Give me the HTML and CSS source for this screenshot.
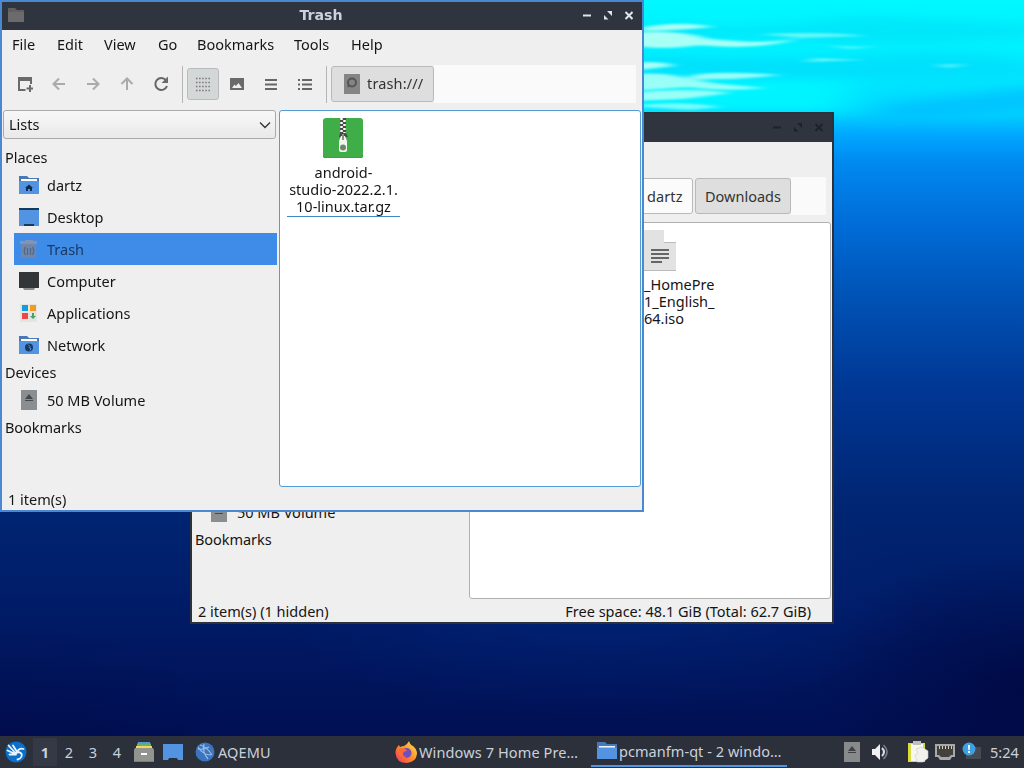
FILE: index.html
```html
<!DOCTYPE html>
<html lang="en">
<head>
<meta charset="utf-8">
<title>Desktop</title>
<link rel="stylesheet" href="styles.css">
</head>
<body>
<div class="desktop">
  <svg class="wallpaper" width="1024" height="768" viewBox="0 0 1024 768">
    <defs>
      <linearGradient id="sea" x1="0" y1="0" x2="0" y2="1">
        <stop offset="0" stop-color="#00f8ff"/>
        <stop offset=".07" stop-color="#00f0ff"/>
        <stop offset=".11" stop-color="#00e4ff"/>
        <stop offset=".15" stop-color="#00d0ff"/>
        <stop offset=".175" stop-color="#00a8ff"/>
        <stop offset=".21" stop-color="#008af0"/>
        <stop offset=".29" stop-color="#006dd8"/>
        <stop offset=".38" stop-color="#0054b8"/>
        <stop offset=".5" stop-color="#003895"/>
        <stop offset=".65" stop-color="#002674"/>
        <stop offset=".8" stop-color="#001b66"/>
        <stop offset=".96" stop-color="#000f53"/>
      </linearGradient>
      <radialGradient id="deep"><stop offset="0" stop-color="#00063d" stop-opacity=".7"/><stop offset="1" stop-color="#00063d" stop-opacity="0"/></radialGradient>
      <radialGradient id="glow"><stop offset="0" stop-color="#00369a" stop-opacity=".3"/><stop offset="1" stop-color="#00369a" stop-opacity="0"/></radialGradient>
      <filter id="soft" x="-20%" y="-100%" width="140%" height="300%"><feGaussianBlur stdDeviation="7 1"/></filter>
      <filter id="wide" x="-20%" y="-100%" width="140%" height="300%"><feGaussianBlur stdDeviation="24 5"/></filter>
    </defs>
    <rect width="1024" height="768" fill="url(#sea)"/>
    <g filter="url(#wide)">
      <path d="M640 22Q760 35 850 15L1040 25V35Q880 50 760 35L640 40Z" fill="#00dcf6" opacity=".55"/>
      <path d="M640 52Q740 65 860 55T1040 65V76Q840 82 640 70Z" fill="#00d8fa" opacity=".5"/>
      <path d="M880 106L1060 84V105Q960 115 880 122Z" fill="#00b4ff" opacity=".55"/>
      <path d="M600 80H850V112H600Z" fill="#00f8ff" opacity=".85"/>
    </g>
    <g filter="url(#soft)" fill="#a8fff6">
      <path d="M640 28Q680 20 712 27Q675 31 640 31Z"/>
      <path d="M630 33Q680 29 708 39L750 42Q779 42 799 38Q760 51 700 45Q660 51 630 45Z"/>
      <path d="M630 63Q663 60 674 66L630 71Z"/>
      <path d="M690 76Q712 70 780 75Q735 80 718 79L690 80Z" opacity=".9"/>
      <path d="M630 74Q670 72 684 78L720 84L765 88Q720 92 690 87L630 91Z" opacity=".9"/>
      <path d="M630 93Q690 87 730 93L684 99L630 101Z" opacity=".9"/>
      <path d="M815 58L865 60L805 62ZM825 45Q850 48 880 46L850 49ZM760 34Q830 31 865 36L800 38ZM935 65L965 64L950 68Z" opacity=".6"/>
      <path d="M630 106Q680 100 720 107L690 110Z" opacity=".7"/>
    </g>
    <ellipse cx="1024" cy="690" rx="210" ry="140" fill="url(#deep)"/>
    <ellipse cx="600" cy="600" rx="330" ry="120" fill="url(#glow)"/>
    <ellipse cx="0" cy="740" rx="240" ry="120" fill="url(#deep)" opacity=".4"/>
  </svg>

  <section class="window back">
    <header class="titlebar">
      <svg class="controls" width="50" height="12" viewBox="0 0 50 12"><path d="M0 6.500h8" stroke-width="2"/><path d="M21 10.500V6l4.500 4.500zM29 2v5l-5-5z" fill="currentColor" stroke="none"/><path d="M42.500 3l7 7m0-7l-7 7" stroke-width="2"/></svg>
    </header>
    <div class="menubar"></div>
    <div class="toolbar">
      <div class="pathbar"><span class="crumb plain">dartz</span><span class="crumb current">Downloads</span><span class="path-rest"></span></div>
    </div>
    <div class="body">
      <aside class="sidebar">
        <div class="bottom-places">
          <div class="place"><svg class="ico" viewBox="0 0 20 20"><path fill="#8b8e91" d="M2 0h16v20H2z"/><path fill="#45484b" d="M10 5l4 5H6zM6 11h8v1H6z"/></svg><span class="volume">50 MB Volume</span></div>
          <div class="group bookmarks">Bookmarks</div>
        </div>
      </aside>
      <main class="files">
        <div class="iso">
          <svg width="34" height="42" viewBox="0 0 34 42"><path d="M0 0h20v12h12v28H0z" fill="#e2e2e2"/><path d="M20 12.500h12M0 40.500h32" stroke="#bbb"/><path d="M7 20h18M7 24h18M7 28h18M7 32h11" stroke="#666" stroke-width="2"/></svg>
          <div class="iso-name">_HomePre<br>1_English_<br>64.iso</div>
        </div>
      </main>
    </div>
    <footer class="status"><span class="hidden-count">2 item(s) (1 hidden)</span><span class="space">Free space: 48.1 GiB (Total: 62.7 GiB)</span></footer>
  </section>

  <section class="window front">
    <header class="titlebar">
      <svg class="app-icon" width="16" height="14" viewBox="0 0 16 14"><path fill="#5e5f61" d="M0 0h7l2 2h7v12H0z"/><path fill="#6b6b6b" d="M0 4h16v10H0z"/></svg>
      <h1>Trash</h1>
      <svg class="controls" width="50" height="12" viewBox="0 0 50 12"><path d="M0 6.500h8" stroke-width="2"/><path d="M21 10.500V6l4.500 4.500zM29 2v5l-5-5z" fill="currentColor" stroke="none"/><path d="M42.500 3l7 7m0-7l-7 7" stroke-width="2"/></svg>
    </header>
    <nav class="menubar"><span class="m1">File</span><span class="m2">Edit</span><span class="m3">View</span><span class="m4">Go</span><span class="m5">Bookmarks</span><span class="m6">Tools</span><span class="m7">Help</span></nav>
    <div class="toolbar">
      <div class="tools">
        <svg class="tool" viewBox="0 0 16 16"><path fill="none" stroke="#6a6a6a" stroke-width="2" d="M8.500 14H2V2h12v6"/><path fill="#6a6a6a" d="M1 1h14v4H1zM12 9h2v2.500h2.500v2H14V16h-2v-2.500H9.500v-2H12z"/></svg>
        <svg class="tool faded" viewBox="0 0 16 16"><path d="M14 8H3m5-5.500L2.500 8 8 13.500"/></svg>
        <svg class="tool faded" viewBox="0 0 16 16"><path d="M2 8h11M8 2.500L13.500 8 8 13.500"/></svg>
        <svg class="tool faded" viewBox="0 0 16 16"><path d="M8 14V3M2.500 8L8 2.500 13.500 8"/></svg>
        <svg class="tool line" viewBox="0 0 16 16"><path d="M13 4.200A6 6 0 1 0 14 10"/><path stroke="none" fill="#6a6a6a" d="M15 .500v6.500H8.500z"/></svg>
      </div>
      <i class="sep"></i>
      <div class="views">
        <span class="active-view"><svg class="tool dots" viewBox="0 0 16 16"><path d="M1 2.500h14M1 6.500h14M1 10.500h14M1 14.500h14"/></svg></span>
        <svg class="tool" viewBox="0 0 16 16"><path fill="#6a6a6a" fill-rule="evenodd" d="M1 2h14v12H1zM3 12h10L9.500 7 7 10 5.500 8.500z"/></svg>
        <svg class="tool line" viewBox="0 0 16 16"><path d="M2 4h12M2 8.500h12M2 13h12"/></svg>
        <svg class="tool line" viewBox="0 0 16 16"><path d="M1 4h2M1 8.500h2M1 13h2M5 4h10M5 8.500h10M5 13h10"/></svg>
      </div>
      <i class="sep"></i>
      <div class="pathbar"><span class="crumb current trash-crumb"><svg width="16" height="20" viewBox="0 0 16 20"><path fill="#858585" d="M0 0h16v20H0z"/><circle cx="8" cy="8.500" r="4" fill="none" stroke="#555" stroke-width="2"/><path d="M5 11l-1 2" stroke="#555" stroke-width="2"/></svg><b>trash:///</b></span><span class="path-rest"></span></div>
    </div>
    <div class="body">
      <aside class="sidebar">
        <div class="combo"><span>Lists</span><svg width="12" height="8" viewBox="0 0 12 8"><path d="M1 1.500l5 5 5-5" fill="none" stroke="#333" stroke-width="1.300"/></svg></div>
        <div class="group places">Places</div>
        <div class="place"><svg class="ico" viewBox="0 0 20 20"><path fill="#4a78b5" d="M0 1h8l2 2h10v4H0z"/><path fill="#fff" d="M2 4h16v4H2z"/><path fill="#5294e2" d="M0 6h20v13H0z"/><path fill="#0c2c54" d="M10 9.500l4 3.500h-1v3h-2v-2H9v2H7v-3H6z"/></svg><span class="home">dartz</span></div>
        <div class="place"><svg class="ico" viewBox="0 0 20 20"><path fill="#5294e2" d="M0 1h20v18H0z"/><path fill="#16395f" d="M0 1h20v2H0zM5 17h10v2H5z"/></svg><span class="desk">Desktop</span></div>
        <div class="place selected"><svg class="ico" viewBox="0 0 20 20"><path fill="#7e95b5" d="M1 2h5V1h8v1h4v3H1z"/><path fill="#7287a8" d="M2 5h15v14H2z"/><path d="M6.500 8q-2.500 4 0 8M13.500 8q2.500 4 0 8M8.500 9v7M11.500 9v7" fill="none" stroke="#526888" stroke-width="1.300"/></svg><span class="trash">Trash</span></div>
        <div class="place"><svg class="ico" viewBox="0 0 20 20"><path fill="#333639" d="M0 1h20v16H0z"/><path fill="#8b8d8f" d="M4 17h12l-1 2H5z"/></svg><span class="computer">Computer</span></div>
        <div class="place"><svg class="ico" viewBox="0 0 20 20"><path fill="#e5e4df" d="M1 1h17v18H1z"/><path fill="#139cdf" d="M3 2h6v6H3z"/><path fill="#f19b22" d="M11 2h6v6h-6z"/><path fill="#ed4747" d="M3 10h6v6H3z"/><path fill="#42a466" d="M13 10h2v3h2l-3 3-3-3h2z"/></svg><span class="apps">Applications</span></div>
        <div class="place"><svg class="ico" viewBox="0 0 20 20"><path fill="#4a78b5" d="M0 1h8l2 2h10v4H0z"/><path fill="#fff" d="M2 4h16v4H2z"/><path fill="#5294e2" d="M0 6h20v13H0z"/><circle cx="10" cy="12.500" r="4" fill="#16395f"/><path d="M9 9.500l2 2-1 1 2 1-1 2" fill="none" stroke="#5294e2"/></svg><span class="network">Network</span></div>
        <div class="group devices">Devices</div>
        <div class="place"><svg class="ico" viewBox="0 0 20 20"><path fill="#8b8e91" d="M2 0h16v20H2z"/><path fill="#45484b" d="M10 4l4 5H6zM6 10h8v1H6z"/></svg><span class="volume">50 MB Volume</span></div>
        <div class="group bookmarks">Bookmarks</div>
      </aside>
      <main class="files">
        <div class="archive">
          <svg class="zip" width="40" height="40" viewBox="0 0 40 40"><rect width="40" height="40" rx="3" fill="#3fae49"/><path d="M0 37q0 3 3 3h34q3 0 3-3" fill="none" stroke="#329b3d"/><path fill="#474b43" d="M17 0h6v15l2 4h-9l1-4z"/><path d="M18.500 0v15M21.500 2v13" stroke="#fff" stroke-width="2.500" stroke-dasharray="2 2"/><path fill="#f2f5ee" d="M18 18h4l2 5v9q0 2-2 2h-4q-2 0-2-2v-9z"/><circle cx="20" cy="29.500" r="3" fill="#6b8a6b"/><path d="M20 16v6" stroke="#8b9187" stroke-width="2"/></svg>
          <div class="archive-name">android-<br>studio-2022.2.1.<br>10-linux.tar.gz</div>
        </div>
      </main>
    </div>
    <footer class="status"><span class="count">1 item(s)</span></footer>
  </section>

  <footer class="panel">
    <svg class="start" width="22" height="22" viewBox="0 0 22 22"><circle cx="11" cy="11" r="10.500" fill="#0b6fcb"/><path d="M3.500 4.500l7.500 8M2.500 9.500l8 3.500M8 4.500l4.500 7M4.500 13.500l6.500 0M11 12.500q3-6 7.500-4.500M13 11q5 1 3.500 4.500-1 2.500-4 3" fill="none" stroke="#e9f5ff" stroke-width="1.800" stroke-linecap="round"/></svg>
    <div class="pager"><span class="on">1</span><span>2</span><span>3</span><span>4</span></div>
    <svg class="cabinet" width="20" height="20" viewBox="0 0 20 20"><path fill="#5597c2" d="M4 0h12v3H4z"/><path fill="#60b373" d="M3 1.500h14V5H3z"/><path fill="#f7d75b" d="M2 4h16v4H2z"/><path fill="#92948f" d="M1 6h18l1 2v12H0V8z"/><path fill="#7b7d78" d="M0 19h20v1H0z"/><path fill="#fff" d="M7 11h6v2H7z"/></svg>
    <svg class="show" width="20" height="18" viewBox="0 0 20 18"><path fill="#5294e2" d="M0 1h20v16h-5l-1-2H6l-1 2H0z"/></svg>
    <div class="task aqemu"><svg width="20" height="20" viewBox="0 0 20 20"><circle cx="10" cy="10" r="9.500" fill="#3b74c0"/><path d="M3 5q5 8 13 8M5 3q7 2 12 10M9 2q-2 8 4 15M14 5q-5 3-11 2" stroke="#9bbce2" stroke-width="1.200" fill="none"/></svg><span>AQEMU</span></div>
    <div class="task firefox"><svg width="22" height="22" viewBox="0 0 22 22"><defs><linearGradient id="fire" x1="1" y1="0" x2="0" y2="1"><stop offset="0" stop-color="#ffe94a"/><stop offset=".5" stop-color="#ff8f2b"/><stop offset="1" stop-color="#f32d5d"/></linearGradient></defs><path d="M14 0q1 4 4 5 4 3 4 8-1 8-10 9Q1 22 .500 12 .500 7 4 4l1 2q2-1 4-1 3-1 5-5z" fill="url(#fire)"/><circle cx="11.500" cy="12" r="5" fill="#7050c0"/><path d="M4 8q6-2 8 2-4 0-4 3 0 3 4 3-6 2-8-3z" fill="#f96c39"/></svg><span>Windows 7 Home Pre…</span></div>
    <div class="task pcman"><svg width="20" height="18" viewBox="0 0 20 18"><path fill="#4779b6" d="M0 0h8l2 2h10v5H0z"/><path fill="#edf5ff" d="M2 4h16v2H2z"/><path fill="#5294e2" d="M0 5.500h20V17H0z"/></svg><span>pcmanfm-qt - 2 windo…</span></div>
    <div class="tray">
      <svg width="16" height="20" viewBox="0 0 16 20"><path fill="#87898b" d="M0 0h16v20H0z"/><path fill="#3f4246" d="M8 4l4 5H4zM4 10h8v1H4z"/></svg>
      <svg class="speaker" width="18" height="18" viewBox="0 0 18 18"><path fill="#f0f0f0" d="M1 6h3l5-5v16l-5-5H1z"/><path d="M11 5q4 4 0 8" fill="none" stroke="#ddd" stroke-width="2"/><path d="M12.500 2q7 7 0 14" fill="none" stroke="#777d86" stroke-width="1.500"/></svg>
      <svg class="clip" width="21" height="22" viewBox="0 0 21 22"><path fill="#d9dc3d" d="M0 2h17v19H0z"/><path fill="#f7f7ef" d="M3 3h12v17H3z"/><path fill="#bfc0b9" d="M5 0h8v4H5z"/><path fill="#f1f1ed" stroke="#cdcdc7" stroke-width=".6" d="M8 8l6-2 6 4v7l-5 4H9L7 14l3-2z"/></svg>
      <svg class="lan" width="20" height="18" viewBox="0 0 20 18"><path fill="#a7a8a9" d="M0 1h20v13h-3l-2 3H5l-2-3H0z"/><path fill="#42413b" d="M2 3h16v9h-2l-2 2H6l-2-2H2z"/><path fill="#d4cfbd" d="M4 3h1v3H4zm3 0h1v3H7zm3 0h1v3h-1zm3 0h1v3h-1zm3 0h1v3h-1z"/></svg>
      <svg class="update" width="20" height="20" viewBox="0 0 20 20"><path fill="#454b55" d="M4 5h15v12H4z"/><circle cx="7" cy="7" r="6.500" fill="#409fe0"/><path fill="#fff" d="M6 3h2l-.3 5H6.300zM6 9h2v2H6z"/></svg>
      <span class="clock">5:24</span>
    </div>
  </footer>
</div>
</body>
</html>
```
FILE: styles.css
```css
* { box-sizing: border-box; }
body { margin: 0; overflow: hidden; font: 14.5px/17px "Noto Sans", "Open Sans", sans-serif; color: #151515; }
svg { display: block; flex: none; }
span { white-space: nowrap; }
.desktop { position: relative; width: 1024px; height: 768px; overflow: hidden; background: #001b66; display: flex; flex-direction: column; justify-content: flex-end; }
.wallpaper { position: absolute; inset: 0; }
.window { position: absolute; width: 644px; height: 512px; border: 2px solid; background: #efefef; display: flex; flex-direction: column; }
.front { left: 0; top: 0; border-color: #4a88d2; }
.back { left: 190px; top: 112px; border-color: #2c313b; }
.titlebar { height: 28px; flex: none; display: flex; align-items: center; justify-content: space-between; background: #2f343f; color: #e0e5eb; padding: 0 9px 2px 6px; }
.titlebar h1 { margin: 0; font: bold 14.2px "DejaVu Sans", sans-serif; color: #cbd2df; padding-left: 35px; }
.controls { fill: none; stroke: currentColor; }
.back .titlebar { justify-content: flex-end; color: #1d212a; }
.menubar { height: 30px; flex: none; display: flex; align-items: center; padding: 0 0 2px 10px; }
.m1 { width: 45px; } .m2 { width: 47px; } .m3 { width: 54px; } .m4 { width: 39px; } .m5 { width: 97px; } .m6 { width: 57px; }
.toolbar { height: 48px; flex: none; display: flex; align-items: center; padding: 0 6px 0 15px; }
.tools, .views { display: flex; align-items: center; gap: 18px; }
.tool { width: 16px; height: 16px; fill: none; }
.line { stroke: #666; stroke-width: 2; }
.faded { stroke: #aaa; stroke-width: 2; }
.sep { width: 1px; height: 37px; background: #b5b5b5; }
.tools + .sep, .views + .sep { margin: 0 4px 0 13px; }
.active-view { width: 32px; height: 32px; margin-right: -8px; border: 1px solid #b8bbbb; border-radius: 3px; background: #d4d7d7; display: grid; place-items: center; }
.dots { stroke: #777; stroke-width: 1.4; stroke-dasharray: 1.5 1.6; }
.pathbar { flex: 1; height: 38px; display: flex; align-items: center; }
.crumb { height: 36px; border: 1px solid #b9b9b9; border-radius: 3px; display: flex; align-items: center; color: #333; }
.current { background: #dedede; }
.trash-crumb { width: 103px; padding: 0 0 1px 12px; gap: 7px; }
.trash-crumb b { font-weight: 400; letter-spacing: .15px; }
.path-rest { align-self: stretch; flex: 1; background: #fafafa; }
.back .toolbar { padding-left: 440px; }
.plain { width: 61px; padding-left: 14px; background: #fbfbfb; margin-right: 2px; letter-spacing: .1px; }
.back .current { width: 96px; padding-left: 9px; }
.body { flex: 1; min-height: 0; display: flex; padding: 2px 1px 0 0; }
.sidebar { width: 275px; margin-right: 2px; display: flex; flex-direction: column; }
.combo { height: 29px; margin: 0 1px 7px; padding: 0 4px 0 5px; border: 1px solid #aaa; border-radius: 3px; background: linear-gradient(#f8f8f8,#e9e9e9); display: flex; align-items: center; justify-content: space-between; }
.group { height: 23px; padding-left: 3px; display: flex; align-items: center; flex: none; letter-spacing: -.05px; }
.place { height: 32px; margin-left: 12px; padding-left: 5px; display: flex; align-items: center; gap: 8px; flex: none; }
.ico { width: 20px; height: 20px; }
.selected { background: #3f8ce8; color: #1a3a63; }
.bottom-places { margin-top: auto; padding-bottom: 49px; }
.files { flex: 1; height: 377px; background: #fff; border: 1px solid #569cd2; border-radius: 3px; }
.back .files { border-color: #b0b0b0; }
.archive { width: 113px; margin: 7px 0 0 7px; display: flex; flex-direction: column; align-items: center; border-bottom: 1px solid #4287c8; }
.zip { margin-right: 2px; }
.archive-name { padding-top: 6px; height: 58px; text-align: center; }
.iso { margin: 7px 0 0 174px; }
.iso-name { padding-top: 4px; }
.status { height: 22px; flex: none; display: flex; justify-content: space-between; align-items: center; padding: 0 21px 0 6px; }
.panel { position: relative; height: 32px; background: #2b303b; color: #cbd1dc; display: flex; align-items: center; padding-left: 5px; }
.pager { display: flex; margin-left: 6px; }
.pager span { width: 24px; height: 28px; display: grid; place-items: center; }
.pager .on { background: #343945; font-weight: 700; }
.cabinet { margin-left: 5px; }
.show { margin-left: 9px; }
.task { display: flex; align-items: center; height: 30px; }
.aqemu { margin-left: 12px; gap: 3px; width: 200px; letter-spacing: .1px; }
.firefox { width: 196px; gap: 2px; letter-spacing: .12px; }
.pcman { width: 196px; gap: 2px; padding-left: 6px; border-bottom: 2px solid #5294e2; letter-spacing: .05px; }
.tray { margin-left: auto; display: flex; align-items: center; padding-right: 4px; }
.speaker { margin-left: 11px; }
.clip { margin-left: 19px; }
.lan { margin-left: 6px; }
.update { margin-left: 7px; }
.clock { margin-left: 8px; width: 30px; }
```
